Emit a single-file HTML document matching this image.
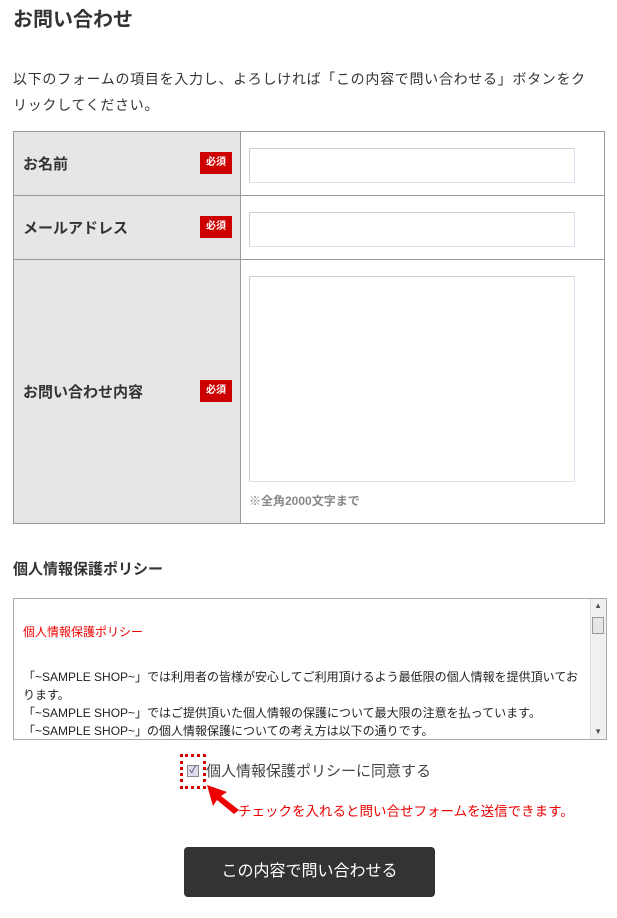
<!DOCTYPE html>
<html><head><meta charset="utf-8"><style>
*{margin:0;padding:0;box-sizing:border-box}
body{width:617px;height:918px;background:#fff;font-family:"Liberation Sans","Noto Sans CJK JP",sans-serif;color:#333;position:relative;overflow:hidden}
.a{position:absolute;white-space:nowrap}
.th{position:absolute;left:13px;width:228px;background:#e6e6e6;border:1px solid #999}
.td{position:absolute;left:240px;width:365px;border:1px solid #999;background:#fff}
.lab{position:absolute;left:9px;font-weight:bold;font-size:15px;color:#333}
.req{position:absolute;left:186px;width:32px;height:22px;background:#c00;color:#fff;font-size:10px;font-weight:bold;text-align:center;line-height:22px}
.inp{position:absolute;left:249px;width:326px;border:1px solid #ccc;border-color:#ccc #dde #dde #ccc;background:#fff;border-radius:2px}
</style></head><body>
<div class="a" style="left:13px;top:3px;font-size:20px;font-weight:bold">お問い合わせ</div>
<div class="a" style="left:13px;top:66px;font-size:14px;line-height:26px;letter-spacing:0.7px;white-space:normal;width:600px">以下のフォームの項目を入力し、よろしければ「この内容で問い合わせる」ボタンをク<br>リックしてください。</div>

<div class="th" style="top:131px;height:65px"><div class="lab" style="top:21px">お名前</div><div class="req" style="top:20px">必須</div></div>
<div class="td" style="top:131px;height:65px"></div>
<div class="th" style="top:195px;height:65px"><div class="lab" style="top:21px">メールアドレス</div><div class="req" style="top:20px">必須</div></div>
<div class="td" style="top:195px;height:65px"></div>
<div class="th" style="top:259px;height:265px"><div class="lab" style="top:121px">お問い合わせ内容</div><div class="req" style="top:120px">必須</div></div>
<div class="td" style="top:259px;height:265px"></div>
<div class="inp" style="top:148px;height:35px"></div>
<div class="inp" style="top:212px;height:35px"></div>
<div class="inp" style="top:276px;height:206px"></div>
<div class="a" style="left:249px;top:492px;font-size:12px;color:#888;font-weight:bold">※全角2000文字まで</div>

<div class="a" style="left:13px;top:558px;font-size:15px;font-weight:bold">個人情報保護ポリシー</div>
<div style="position:absolute;left:13px;top:598px;width:594px;height:142px;border:1px solid #aaa;background:#fff;overflow:hidden">
<div style="position:absolute;right:0;top:0;width:16px;height:140px;background:#f0f0f0;border-left:1px solid #ddd"></div>
<div style="position:absolute;right:2px;top:18px;width:12px;height:17px;background:#e6e6e6;border:1px solid #999"></div>
<div class="a" style="right:4px;top:2px;font-size:8px;color:#555">▲</div>
<div class="a" style="right:4px;top:128px;font-size:8px;color:#555">▼</div>
<div class="a" style="left:9px;top:24px;font-size:12px;color:#e00">個人情報保護ポリシー</div>
<div style="position:absolute;left:9px;top:69px;width:560px;font-size:12px;line-height:18px;color:#222">「~SAMPLE SHOP~」では利用者の皆様が安心してご利用頂けるよう最低限の個人情報を提供頂いております。<br>「~SAMPLE SHOP~」ではご提供頂いた個人情報の保護について最大限の注意を払っています。<br>「~SAMPLE SHOP~」の個人情報保護についての考え方は以下の通りです。</div>
</div>

<div style="position:absolute;left:180px;top:754px;width:26px;height:35px;border:3px dotted #d00"></div>
<div style="position:absolute;left:187px;top:765px;width:12px;height:12px;border:1px solid #888;background:#dde;color:#336;font-size:10px;line-height:10px;text-align:center">✓</div>
<div class="a" style="left:206px;top:760px;font-size:15px;color:#444">個人情報保護ポリシーに同意する</div>
<svg style="position:absolute;left:205px;top:783px" width="36" height="32" viewBox="0 0 36 32"><path d="M2 2 L22 9 L16 13 L34 27 L29 31 L12 17 L8 23 Z" fill="#e00"/></svg>
<div class="a" style="left:238px;top:800px;font-size:13.5px;color:#e00">チェックを入れると問い合せフォームを送信できます。</div>

<div style="position:absolute;left:184px;top:847px;width:251px;height:50px;background:#333;border-radius:4px;color:#fff;font-size:16px;text-align:center;line-height:50px">この内容で問い合わせる</div>
</body></html>
